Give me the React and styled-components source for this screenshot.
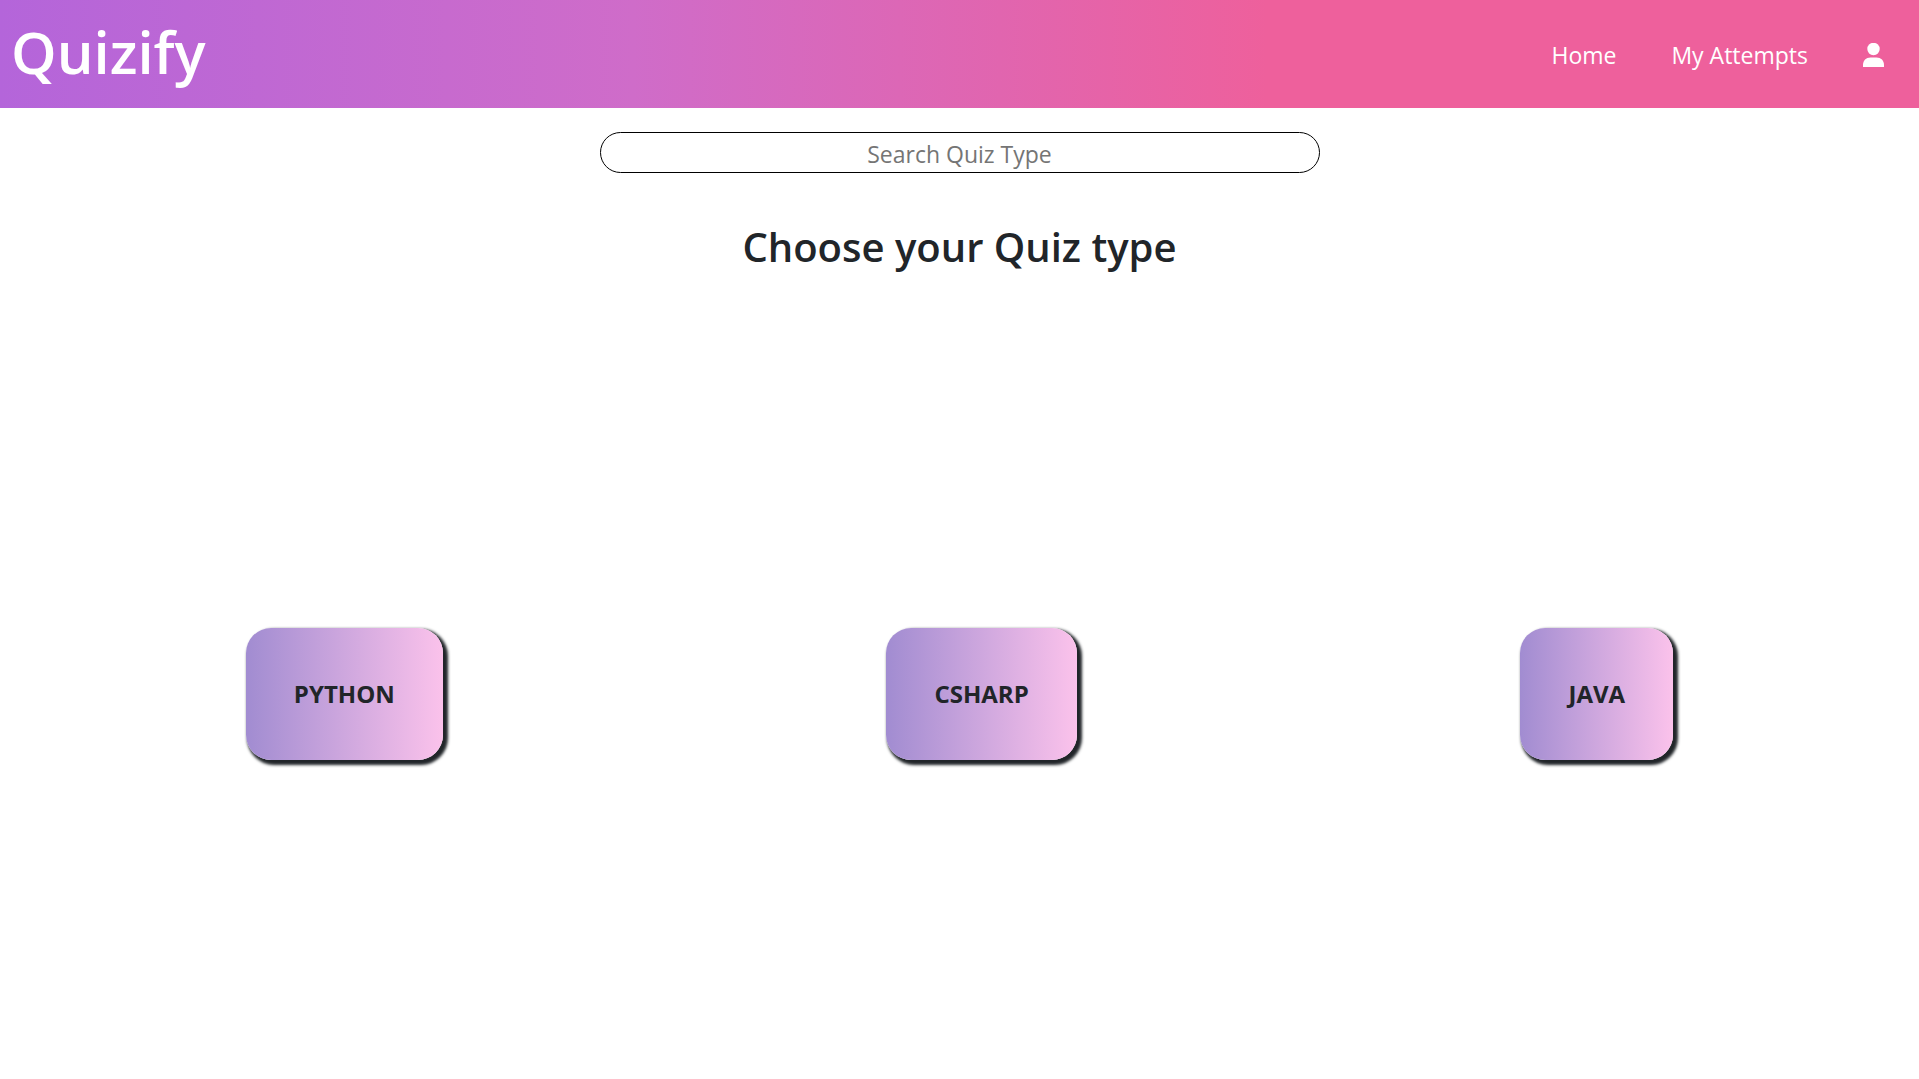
import React, { useState } from "react";
import styled, { createGlobalStyle } from "styled-components";

const GlobalStyle = createGlobalStyle`
  *, *::before, *::after { box-sizing: border-box; }
  body {
    margin: 0;
    background: #fff;
    color: #212529;
    font-family: "Segoe UI", "Open Sans", "Noto Sans", sans-serif;
    font-size: 23px;
    line-height: 36px;
  }
`;

const Page = styled.div`
  display: flex;
  flex-direction: column;
  min-height: 100vh;
`;

const Header = styled.header`
  display: flex;
  align-items: center;
  justify-content: space-between;
  padding: 16px 35px 20px 11px;
  background: linear-gradient(to right, #b465da 0%, #cf6cc9 33%, #ee609c 66%, #ee609c 100%);
  color: #fff;
`;

const Logo = styled.a`
  color: inherit;
  text-decoration: none;
  font-size: 58px;
  line-height: 72px;
  font-weight: 600;
`;

const Nav = styled.nav`
  display: flex;
  align-items: center;
  gap: 55px;
  padding-top: 6px;
`;

const NavLink = styled.a`
  display: flex;
  align-items: center;
  color: inherit;
  text-decoration: none;
`;

const Main = styled.main`
  display: flex;
  flex: 1;
  flex-direction: column;
  align-items: center;
  padding-top: 24px;
`;

const SearchInput = styled.input`
  width: 720px;
  max-width: 90%;
  height: 41px;
  padding: 2px 8px 0;
  border: 1px solid #000;
  border-radius: 24px;
  background: #fff;
  color: #212529;
  font: inherit;
  text-align: center;

  &::placeholder {
    color: #757575;
    opacity: 1;
  }
`;

const Title = styled.h1`
  margin: 50px 0 38px;
  font-size: 40px;
  line-height: 48px;
  font-weight: 600;
`;

const QuizList = styled.div`
  display: flex;
  flex: 1;
  flex-wrap: wrap;
  align-items: center;
  justify-content: space-around;
  align-self: stretch;
  padding: 0 24px;
`;

const QuizButton = styled.button`
  padding: 48px;
  border: 0;
  border-radius: 25px;
  background: linear-gradient(to right, #a18cd1 0%, #fbc2eb 100%);
  box-shadow: 3px 3px 3px 2px #212529;
  color: #212529;
  font: inherit;
  font-size: 24px;
  font-weight: 700;
  cursor: pointer;
`;

const quizTypes = ["PYTHON", "CSHARP", "JAVA"];

function UserIcon() {
  return (
    <svg width="21" height="24" viewBox="0 0 21 24" fill="currentColor" aria-hidden="true">
      <circle cx="10.5" cy="6" r="6.2" />
      <path d="M0 24v-2c0-4.500 3-7.500 7.500-7.500h6c4.500 0 7.500 3 7.500 7.500v2z" />
    </svg>
  );
}

export default function App() {
  const [query, setQuery] = useState("");
  const shown = quizTypes.filter((name) => name.includes(query.trim().toUpperCase()));

  return (
    <>
      <GlobalStyle />
      <Page>
        <Header>
          <Logo href="#home">Quizify</Logo>
          <Nav>
            <NavLink href="#home">Home</NavLink>
            <NavLink href="#attempts">My Attempts</NavLink>
            <NavLink href="#profile" aria-label="Profile">
              <UserIcon />
            </NavLink>
          </Nav>
        </Header>
        <Main>
          <SearchInput
            type="text"
            aria-label="Search Quiz Type"
            placeholder="Search Quiz Type"
            value={query}
            onChange={(e) => setQuery(e.target.value)}
          />
          <Title>Choose your Quiz type</Title>
          <QuizList>
            {shown.map((name) => (
              <QuizButton key={name} type="button">{name}</QuizButton>
            ))}
          </QuizList>
        </Main>
      </Page>
    </>
  );
}
